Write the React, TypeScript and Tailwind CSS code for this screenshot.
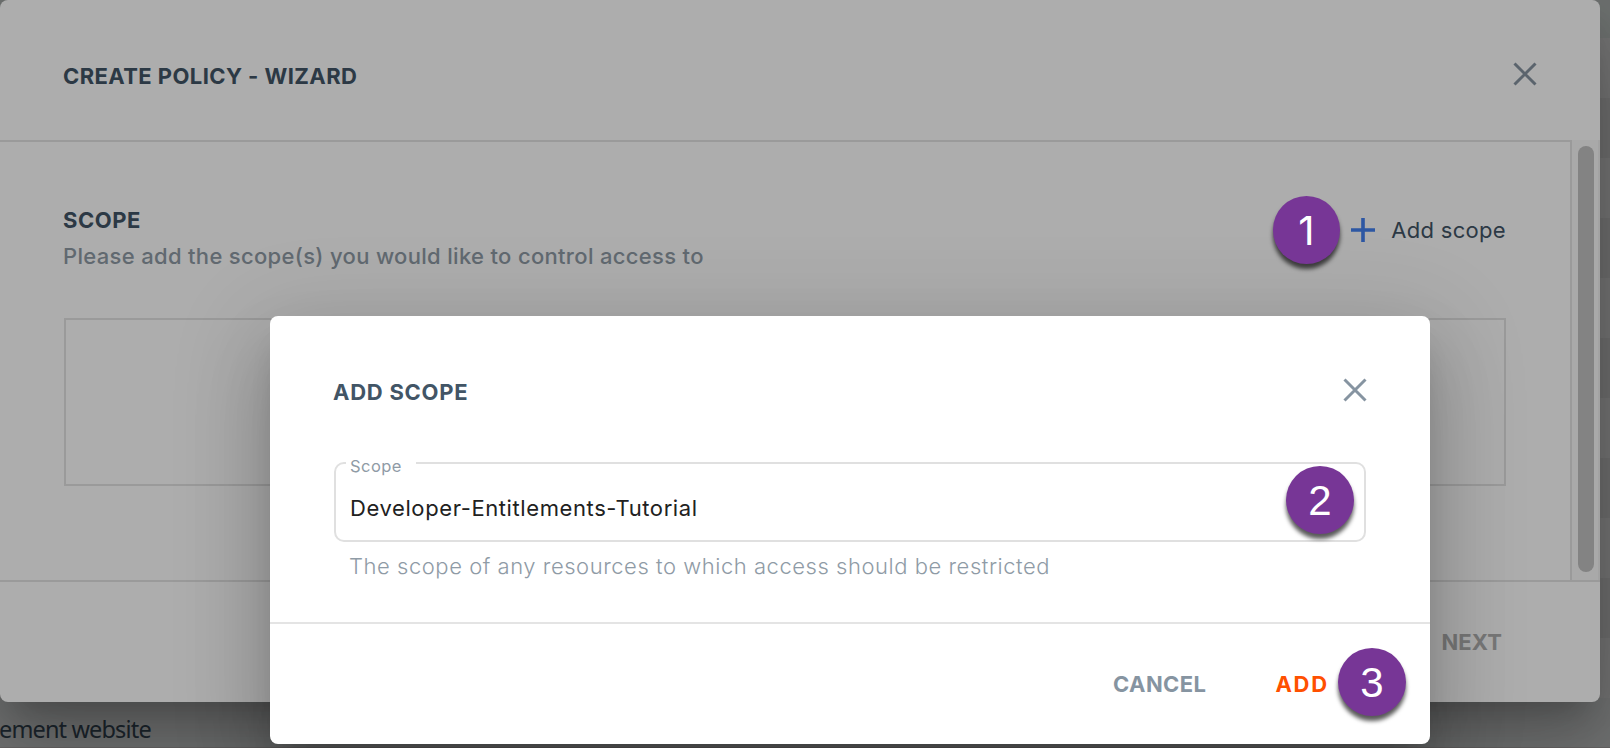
import type { ReactNode } from "react";

function CloseIcon({ className }: { className: string }) {
  return (
    <svg className={className} viewBox="0 0 24 24" fill="none" stroke="currentColor" strokeWidth="3">
      <path d="M1.5 1.5L22.5 22.5M22.5 1.5L1.5 22.5" />
    </svg>
  );
}

function Badge({ children, className }: { children: ReactNode; className: string }) {
  return (
    <span
      className={`absolute flex items-center justify-center rounded-full bg-[#773696] pt-0.5 leading-none font-normal text-white shadow-[0_5px_4px_rgba(0,0,0,0.65)] ${className}`}
    >
      {children}
    </span>
  );
}

const rows = Array.from({ length: 11 }, (_, i) => i);

function BackgroundPage() {
  return (
    <div className="flex h-full flex-col bg-white">
      <div className="h-[38px] shrink-0 bg-[#f0f8f5]" />
      {rows.map((i) => (
        <div key={i} className={i % 2 ? "h-[60px] shrink-0 bg-[#f2f2f2]" : "h-[60px] shrink-0 bg-white"} />
      ))}
      <div className="flex h-[50px] shrink-0 items-center border-b border-[#e0dcdc] bg-[#f6faf9] pt-3">
        <span className="-ml-px font-['Noto_Sans',sans-serif] text-[23.5px] leading-8 tracking-[-0.85px] text-[#3f5364]">
          ement website
        </span>
      </div>
    </div>
  );
}

function Wizard() {
  return (
    <section className="flex h-[702px] w-[1600px] flex-col overflow-hidden rounded-lg bg-white text-[#425566] shadow-[0_22px_30px_-14px_rgba(0,0,0,0.2),0_48px_76px_6px_rgba(0,0,0,0.14),0_18px_92px_16px_rgba(0,0,0,0.12)]">
      <header className="flex h-[140px] shrink-0 items-center justify-between px-[63px]">
        <h1 className="pt-3 text-[22px] font-bold tracking-[0.42px]">CREATE POLICY - WIZARD</h1>
        <CloseIcon className="mt-2 size-6 text-[#8694a1]" />
      </header>
      <div className="flex h-[440px] shrink-0">
        <div className="w-[1572px] border-t-2 border-r-2 border-[#e4e4e4] pt-[62px] pr-[64px] pl-[63px]">
          <div className="flex items-start justify-between">
            <div>
              <h2 className="text-[22px] leading-8 font-bold tracking-[0.5px]">SCOPE</h2>
              <p className="mt-1 text-[22px] leading-8 font-medium tracking-[0.32px] text-[#8f9ba6]">
                Please add the scope(s) you would like to control access to
              </p>
            </div>
            <button className="mt-2.5 flex items-center gap-4 text-[22px] leading-8 tracking-[0.3px]">
              <svg className="size-6 text-[#4380f0]" viewBox="0 0 24 24" stroke="currentColor" strokeWidth="3.6">
                <path d="M0 12H24M12 0V24" />
              </svg>
              Add scope
            </button>
          </div>
          <div className="mt-[46px] ml-px h-[168px] border-2 border-[#e4e4e4]" />
        </div>
        <div className="flex w-7 justify-between border-r-2 border-[#f0f0f0] bg-[#fafafa] py-1.5 pl-1.5">
          <div className="h-[426px] w-4 rounded-full bg-[#c1c1c1]" />
        </div>
      </div>
      <footer className="flex flex-1 items-center justify-end border-t-2 border-[#e4e4e4] pr-[98px]">
        <button className="text-[22px] font-bold tracking-[0.1px] text-[#b0b0b0]">NEXT</button>
      </footer>
    </section>
  );
}

function ScopeDialog() {
  return (
    <section className="flex h-[428px] w-[1160px] flex-col rounded-lg bg-white shadow-[0_22px_30px_-14px_rgba(0,0,0,0.2),0_48px_76px_6px_rgba(0,0,0,0.14),0_18px_92px_16px_rgba(0,0,0,0.12)]">
      <header className="flex h-[146px] shrink-0 items-center justify-between px-[63px]">
        <h2 className="pt-1.5 text-[22px] font-bold tracking-[0.75px] text-[#425566]">ADD SCOPE</h2>
        <CloseIcon className="mt-0.5 size-6 text-[#8694a1]" />
      </header>
      <div className="h-[160px] shrink-0 px-16">
        <div className="relative flex h-20 items-center rounded-[10px] border-2 border-[#e0e0e0] px-3.5">
          <span className="absolute -top-2.5 left-2.5 w-[70px] bg-white pl-1 text-[16.5px] leading-6 tracking-[0.45px] text-[#8f9ba6]">
            Scope
          </span>
          <span className="pt-3 text-[22px] tracking-[0.6px] text-[#212121]">Developer-Entitlements-Tutorial</span>
          <Badge className="top-[2px] right-[10px] size-[68px] font-['Liberation_Sans',sans-serif] text-[42px]">2</Badge>
        </div>
        <p className="mt-2 pl-[15px] text-[22px] leading-8 font-light tracking-[0.54px] text-[#8f9ba6]">
          The scope of any resources to which access should be restricted
        </p>
      </div>
      <footer className="relative flex flex-1 items-center justify-end gap-[69px] border-t-2 border-[#e4e4e4] pr-[101px] text-[22px] font-bold">
        <button className="tracking-[0.4px] text-[#8694a1]">CANCEL</button>
        <button className="tracking-[1.8px] text-[#ff5000]">ADD</button>
        <Badge className="top-[24px] right-[24px] size-[68px] font-['Liberation_Sans',sans-serif] text-[42px]">3</Badge>
      </footer>
    </section>
  );
}

export default function App() {
  return (
    <main className="relative h-[748px] w-[1610px] overflow-hidden font-[Inter,sans-serif]">
      <BackgroundPage />
      <div className="absolute inset-0 bg-black/[.32]">
        <Wizard />
      </div>
      <div className="absolute inset-0 bg-black/[.32] pt-[316px] pl-[270px]">
        <ScopeDialog />
      </div>
      <Badge className="top-[196px] left-[1273px] h-[68px] w-[67px] text-[40px]">1</Badge>
    </main>
  );
}
